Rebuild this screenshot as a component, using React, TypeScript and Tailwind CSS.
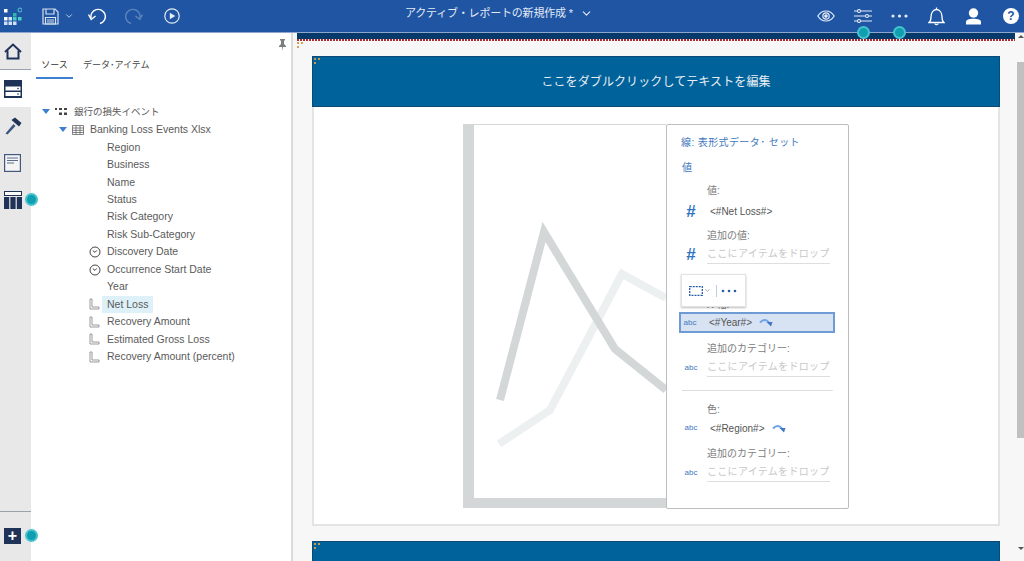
import React from 'react';
import { ChevronDown } from 'lucide-react';

const fieldRows = [
  { label: 'Region', icon: '' },
  { label: 'Business', icon: '' },
  { label: 'Name', icon: '' },
  { label: 'Status', icon: '' },
  { label: 'Risk Category', icon: '' },
  { label: 'Risk Sub-Category', icon: '' },
  { label: 'Discovery Date', icon: 'clock' },
  { label: 'Occurrence Start Date', icon: 'clock' },
  { label: 'Year', icon: '' },
  { label: 'Net Loss', icon: 'measure', selected: true },
  { label: 'Recovery Amount', icon: 'measure' },
  { label: 'Estimated Gross Loss', icon: 'measure' },
  { label: 'Recovery Amount (percent)', icon: 'measure' },
];

const Dot = ({ className }: { className: string }) => (
  <span className={`absolute w-[13px] h-[13px] rounded-full bg-[#0f9fb0] border-2 border-[#45c3cf] ${className}`} />
);

const Caret = () => (
  <svg width="8" height="5" viewBox="0 0 8 5">
    <path d="M0 0h8L4 5z" fill="#3f7fd0" />
  </svg>
);

const ClockIcon = () => (
  <svg width="12" height="12" viewBox="0 0 12 12" fill="none" stroke="#444" strokeWidth="1">
    <circle cx="6" cy="6" r="5" />
    <path d="M3.800 4.600 6 6.400 7.800 4.400" />
  </svg>
);

const MeasureIcon = () => (
  <svg width="11" height="12" viewBox="0 0 11 12" fill="none" stroke="#999" strokeWidth="1">
    <path d="M1 1h2v8h7v2H1z" />
  </svg>
);

const ArrowIcon = () => (
  <svg width="14" height="9" viewBox="0 0 14 9" className="ml-[7px]">
    <path d="M1 4.500C4 1 7.500 1 10 4.500" fill="none" stroke="#6ea3ea" strokeWidth="2" />
    <path d="M7.500 4h6L12 8.500z" fill="#3f78c8" />
  </svg>
);

const AbcIcon = () => <span className="w-[20px] mr-[6px] text-[8px] leading-none text-[#3f78c0] text-center shrink-0">abc</span>;
const HashIcon = () => <span className="w-[20px] mr-[6px] text-[17px] leading-none font-bold text-[#2f75c4] text-center shrink-0">#</span>;

const DropSlot = ({ icon, label }: { icon: React.ReactNode; label: string }) => (
  <div>
    <div className="pl-[26px] text-[#7d7d7d] leading-[14px]">{label}</div>
    <div className="flex items-center mt-[2px]">
      {icon}
      <span className="flex-1 h-[19px] leading-[18px] border-b border-[#dedede] text-[#c8c8c8] tracking-[0.3px] whitespace-nowrap">ここにアイテムをドロップ</span>
    </div>
  </div>
);

const Handle = () => (
  <span className="absolute left-[1px] top-[1px] w-[6px] h-[6px] border-t-2 border-l-2 border-dotted border-[#c59a4a]" />
);

const App: React.FC = () => {
  return (
    <div className="w-[1024px] h-[561px] overflow-hidden flex flex-col bg-white text-[10.500px] font-['Liberation_Sans','Noto_Sans_CJK_JP',sans-serif]">
      {/* top bar */}
      <header className="relative h-[33px] shrink-0 bg-[#1f55a3] border-b border-[#8ca6cc] flex items-center text-white z-10">
        <svg width="18" height="18" viewBox="0 0 18 18" className="ml-[4px]">
          <rect x="0" y="2" width="3.500" height="3.500" fill="#fff" />
          <rect x="0" y="10" width="3.500" height="3.500" fill="#fff" />
          <rect x="0" y="14.500" width="3.500" height="3.500" fill="#cfe0f5" />
          <rect x="4.500" y="14.500" width="3.500" height="3.500" fill="#cfe0f5" />
          <rect x="9" y="14.500" width="3.500" height="3.500" fill="#cfe0f5" />
          <rect x="4.500" y="10" width="3.500" height="3.500" fill="#cfe0f5" />
          <rect x="9" y="10" width="3.500" height="3.500" fill="#4cc9c0" />
          <rect x="9" y="6" width="3.500" height="3.500" fill="#2fb4ae" />
          <rect x="14" y="10" width="3.500" height="3.500" fill="#4cd0c4" />
          <circle cx="16" cy="3" r="2" fill="none" stroke="#58c8d0" />
        </svg>
        <svg width="17" height="17" viewBox="0 0 17 17" fill="none" stroke="#d5e0f0" strokeWidth="1.200" className="ml-[20px]">
          <path d="M1 1h12l3 3v12H1z" />
          <path d="M4 1v5h8V1M3.500 9.500h10v6.500h-10zM5 12h7M5 14h7" />
        </svg>
        <ChevronDown size={10} strokeWidth={2} className="ml-[5px] text-[#dbe5f3]" />
        <svg width="18" height="18" viewBox="0 0 18 18" fill="none" stroke="#fff" strokeWidth="1.400" className="ml-[14px]">
          <path d="M12 16.500A7.200 7.200 0 1 0 3.200 11.500" />
          <path d="M.5 7.500 3.200 12.500 7.500 9" />
        </svg>
        <svg width="18" height="18" viewBox="0 0 18 18" fill="none" stroke="#5f84bb" strokeWidth="1.400" className="ml-[19px]">
          <path d="M6 16.500A7.200 7.200 0 1 1 14.800 11.500" />
          <path d="M17.500 7.500 14.800 12.500 10.500 9" />
        </svg>
        <svg width="16" height="16" viewBox="0 0 16 16" className="ml-[21px]">
          <circle cx="8" cy="8" r="7.200" fill="none" stroke="#e6edf7" strokeWidth="1.200" />
          <path d="M5.800 4.800 11.300 8l-5.500 3.200z" fill="#e6edf7" />
        </svg>
        <div className="absolute left-[405px] top-[6px] flex items-center text-[11px] leading-[14px] text-[#e4ebf6] tracking-[-0.2px]">
          <span>アクティブ・レポートの新規作成 *</span>
          <ChevronDown size={13} strokeWidth={2} className="ml-[7px]" />
        </div>
        <div className="ml-auto flex items-center">
          <svg width="18" height="12" viewBox="0 0 18 12" fill="none" stroke="#e4ebf6" strokeWidth="1.200">
            <path d="M.8 6C3 2.500 5.800 1 9 1s6 1.500 8.200 5c-2.200 3.500-5 5-8.200 5S3 9.500.8 6z" />
            <circle cx="9" cy="6" r="3.200" />
            <circle cx="9" cy="6" r="1.200" fill="#e4ebf6" />
          </svg>
          <svg width="18" height="14" viewBox="0 0 18 14" fill="none" stroke="#e4ebf6" strokeWidth="1.100" className="ml-[19px]">
            <path d="M0 2h18M0 7h18M0 12h18" />
            <circle cx="5" cy="2" r="1.500" fill="#1f55a3" />
            <circle cx="13" cy="7" r="1.500" fill="#1f55a3" />
            <circle cx="5" cy="12" r="1.500" fill="#1f55a3" />
          </svg>
          <svg width="17" height="4" viewBox="0 0 17 4" fill="#e4ebf6" className="ml-[19px]">
            <circle cx="2" cy="2" r="1.600" />
            <circle cx="8.500" cy="2" r="1.600" />
            <circle cx="15" cy="2" r="1.600" />
          </svg>
          <svg width="17" height="19" viewBox="0 0 17 19" fill="none" stroke="#fff" strokeWidth="1.300" className="ml-[20px]">
            <path d="M1 15.500c1.500-1 2-2.500 2-5.500 0-4 2-7.500 5.500-7.500S14 6 14 10c0 3 .5 4.500 2 5.500z" />
            <path d="M7 16.500c0 1.500 3 1.500 3 0M8.500 .5v2" />
          </svg>
          <svg width="15" height="17" viewBox="0 0 15 17" fill="#fff" className="ml-[21px]">
            <circle cx="7.500" cy="5" r="4.700" />
            <path d="M0 16.500v-2.500c0-2 3-3.200 7.500-3.200s7.500 1.200 7.500 3.200v2.500z" />
          </svg>
          <span className="ml-[22px] mr-[5px] w-[16px] h-[16px] rounded-full bg-white text-[#1f55a3] text-[12px] leading-[16px] font-bold text-center">?</span>
        </div>
        <Dot className="left-[857px] top-[26px]" />
        <Dot className="left-[893px] top-[26px]" />
      </header>

      <div className="flex flex-1 min-h-0">
        {/* left rail */}
        <nav className="relative w-[31px] shrink-0 bg-[#e8e8e8] flex flex-col">
          <div className="h-[37px] border-b border-[#9aa3ad] flex items-center justify-center pr-[6px]">
            <svg width="18" height="17" viewBox="0 0 18 17" fill="none" stroke="#1f3358" strokeWidth="2">
              <path d="M1 9 9 1.500 17 9" />
              <path d="M3.500 7.500V15.500h11V7.500" />
            </svg>
          </div>
          <div className="h-[37px] bg-white flex items-center justify-center pr-[6px]">
            <svg width="18" height="18" viewBox="0 0 18 18">
              <rect width="18" height="18" fill="#1f3358" />
              <rect x="1.500" y="6.500" width="15" height="4" fill="#fff" />
              <rect x="1.500" y="12" width="15" height="4" fill="#fff" />
              <circle cx="14" cy="8.500" r=".8" fill="#1f3358" />
              <circle cx="14" cy="14" r=".8" fill="#1f3358" />
            </svg>
          </div>
          <div className="h-[37px] flex items-center justify-center pr-[6px]">
            <svg width="18" height="18" viewBox="0 0 18 18" fill="#1f3358">
              <path d="M1.500 16.500 9.500 7l2 2-8 8.500z" fill="#3d5680" />
              <path d="M7.500 3 11 .5l6.500 5.500-2.500 3.500z" />
            </svg>
          </div>
          <div className="h-[37px] flex items-center justify-center pr-[6px]">
            <svg width="17" height="18" viewBox="0 0 17 18" fill="none">
              <rect x=".6" y=".6" width="15.800" height="16.800" stroke="#43587c" strokeWidth="1.200" fill="#f4f4f4" />
              <path d="M3 4h11M3 6.500h11M3 9h7" stroke="#5b6d8c" strokeWidth="1.200" />
            </svg>
          </div>
          <div className="h-[37px] flex items-center justify-center pr-[6px]">
            <svg width="18" height="18" viewBox="0 0 18 18">
              <rect x=".5" y=".5" width="17" height="4" fill="#fff" stroke="#1f3358" />
              <rect y="6" width="5.200" height="12" fill="#1f3358" />
              <rect x="6.400" y="6" width="5.200" height="12" fill="#1f3358" />
              <rect x="12.800" y="6" width="5.200" height="12" fill="#1f3358" />
            </svg>
          </div>
          <div className="mt-auto h-[50px] border-t border-[#9aa3ad] flex items-start justify-center pt-[16px] pr-[6px]">
            <span className="w-[17px] h-[16px] bg-[#1f3358] text-white text-[16px] leading-[15px] font-bold text-center">+</span>
          </div>
          <Dot className="left-[25px] top-[160px]" />
          <Dot className="left-[25px] top-[496px]" />
        </nav>

        {/* data panel */}
        <aside className="relative w-[262px] shrink-0 border-r-2 border-[#d8dcdc] text-[#555]">
          <svg width="9" height="12" viewBox="0 0 9 12" className="absolute left-[247px] top-[6px]" fill="#7a7f80">
            <path d="M2 0h5v1L6 2v3l2 2v1H5l-.5 4L4 8H1V7l2-2V2L2 1z" />
          </svg>
          <div className="flex pl-[5px] pt-[25px] text-[9px] leading-[14px] text-[#444]">
            <div className="w-[37px] h-[21px] border-b-2 border-[#3f7fd0] text-center text-[#333]">ソース</div>
            <div className="ml-[10px] whitespace-nowrap">データ･アイテム</div>
          </div>
          <div className="pt-[24px] text-[#5a5a5a]">
            <div className="h-[17.500px] flex items-center pl-[11px]">
              <Caret />
              <svg width="12" height="7" viewBox="0 0 12 7" fill="#444" className="ml-[5px]">
                <rect x="0" y="0" width="2" height="2" /><rect x="4" y="0" width="3" height="2" /><rect x="9" y="0" width="3" height="2" />
                <rect x="4" y="4.500" width="3" height="2.500" /><rect x="9" y="4.500" width="3" height="2.500" />
              </svg>
              <span className="ml-[7px] text-[9.500px]">銀行の損失イベント</span>
            </div>
            <div className="h-[18px] flex items-center pl-[28px]">
              <Caret />
              <svg width="12" height="10" viewBox="0 0 12 10" fill="none" stroke="#666" strokeWidth=".8" className="ml-[5px]">
                <path d="M.5.5h11v9H.5zM.5 3h11M.5 5.300h11M.5 7.500h11M4 .5v9M8 .5v9" />
              </svg>
              <span className="ml-[6px]">Banking Loss Events Xlsx</span>
            </div>
            {fieldRows.map((row) => (
              <div key={row.label} className="relative h-[17.450px] flex items-center pl-[76px]">
                <span className="absolute left-[58px] top-[3px] flex">
                  {row.icon === 'clock' && <ClockIcon />}
                  {row.icon === 'measure' && <MeasureIcon />}
                </span>
                <span className={row.selected ? 'bg-[#def1f8] px-[5px] -ml-[5px] leading-[17px]' : 'leading-[17px]'}>{row.label}</span>
              </div>
            ))}
          </div>
        </aside>

        {/* canvas */}
        <main className="relative flex-1 min-w-0 bg-[#f7f7f7] overflow-hidden">
          <div className="h-[6px] ml-[4px] mr-[9px] bg-[#063a6b]" />
          <div className="h-[2px] ml-[4px] mr-[9px] bg-[repeating-linear-gradient(90deg,#b02a30_0_2px,#ffffff_2px_3px)]" />
          <div className="absolute right-0 top-0 bottom-0 w-[7px] flex flex-col items-center">
            <div className="h-[29px] pt-[2px]">
              <div className="w-0 h-0 border-x-[3px] border-x-transparent border-b-[3px] border-b-[#555]" />
            </div>
            <div className="w-full h-[376px] bg-[#c0c0c0]" />
            <div className="mt-auto mb-[11px] w-0 h-0 border-x-[3px] border-x-transparent border-t-[3px] border-t-[#555]" />
          </div>
          <span className="absolute left-[4px] top-[9px] w-[6px] h-[6px] border-t-2 border-l-2 border-dotted border-[#d9a24e]" />
          <div className="pl-[19px] pr-[24px] pt-[15px]">
            <section className="border-r-2 border-b-2 border-l-2 border-[#e4e4e4] bg-white">
              <div className="relative -mx-[2px] h-[51px] bg-[#00629b] border border-[#0b4a78] flex items-center justify-center text-[#e9eef3] text-[12px] tracking-[0.1px]">
                ここをダブルクリックしてテキストを編集
                <Handle />
              </div>
              <div className="relative h-[417px]">
                <div className="absolute left-[149px] top-[17px] w-[203px] h-[384px] border-l-[11px] border-b-[10px] border-t border-[#d3d7d7] bg-white">
                  <svg width="192" height="374" viewBox="0 0 192 374" fill="none" strokeWidth="8">
                    <path d="M25 319 76 285 148 149 192 173" stroke="#edf0f0" />
                    <path d="M26 275 70 107 141 224 192 265" stroke="#d3d7d7" />
                  </svg>
                </div>
                <div className="absolute left-[352px] top-[17px] w-[183px] h-[385px] bg-white border border-[#bdbdbd] rounded-[2px] pt-[9px] text-[10px]">
                  <div className="pl-[14px] text-[#3f78c0] leading-[18px] tracking-[0.4px] whitespace-nowrap">線: 表形式データ･ セット</div>
                  <div className="pl-[15px] mt-[8px] text-[#3f78c0] leading-[16px]">値</div>
                  <div className="pl-[14px] pr-[18px] mt-[8px]">
                    <div className="pl-[26px] text-[#7d7d7d] leading-[14px]">値:</div>
                    <div className="flex items-center mt-[3px] h-[20px]">
                      <HashIcon />
                      <span className="pl-[3px] text-[#555]">&lt;#Net Loss#&gt;</span>
                    </div>
                    <div className="mt-[8px]">
                      <DropSlot icon={<HashIcon />} label="追加の値:" />
                    </div>
                    <div className="pl-[26px] mt-[34px] text-[#7d7d7d] leading-[14px]">X 軸:</div>
                  </div>
                  <div className="ml-[12px] mr-[13px] h-[21px] bg-[#d7e3f2] border-2 border-[#6e9ad6] flex items-center text-[#555]">
                    <span className="w-[18px] text-[8px] text-[#3f78c0] text-center shrink-0">abc</span>
                    <span className="pl-[10px]">&lt;#Year#&gt;</span>
                    <ArrowIcon />
                  </div>
                  <div className="pl-[14px] pr-[18px] mt-[9px]">
                    <DropSlot icon={<AbcIcon />} label="追加のカテゴリー:" />
                  </div>
                  <div className="mx-[15px] mt-[13px] border-t border-[#dedede]" />
                  <div className="pl-[14px] pr-[18px] mt-[12px]">
                    <div className="pl-[26px] text-[#7d7d7d] leading-[14px]">色:</div>
                    <div className="flex items-center mt-[1px] h-[20px] text-[#555]">
                      <AbcIcon />
                      <span className="pl-[3px]">&lt;#Region#&gt;</span>
                      <ArrowIcon />
                    </div>
                    <div className="mt-[9px]">
                      <DropSlot icon={<AbcIcon />} label="追加のカテゴリー:" />
                    </div>
                  </div>
                  <div className="absolute left-[14px] top-[149px] w-[65px] h-[33px] bg-white border border-[#e2e2e2] shadow-[0_1px_2px_rgba(0,0,0,0.25)] flex items-center pl-[7px]">
                    <svg width="14" height="10" viewBox="0 0 14 10" fill="none" stroke="#2a5da8" strokeWidth="1.300" strokeDasharray="2 1">
                      <rect x=".7" y=".7" width="12.600" height="8.600" />
                    </svg>
                    <ChevronDown size={7} className="text-[#777] ml-[1px]" />
                    <span className="h-[12px] border-l border-[#b8d0ea] ml-[5px]" />
                    <svg width="16" height="4" viewBox="0 0 16 4" fill="#2a5da8" className="ml-[4px]">
                      <circle cx="2" cy="2" r="1.300" />
                      <circle cx="8" cy="2" r="1.300" />
                      <circle cx="14" cy="2" r="1.300" />
                    </svg>
                  </div>
                </div>
              </div>
            </section>
            <div className="relative mt-[15px] h-[30px] bg-[#00629b] border border-[#0b4a78]">
              <Handle />
            </div>
          </div>
        </main>
      </div>
    </div>
  );
};

export default App;
